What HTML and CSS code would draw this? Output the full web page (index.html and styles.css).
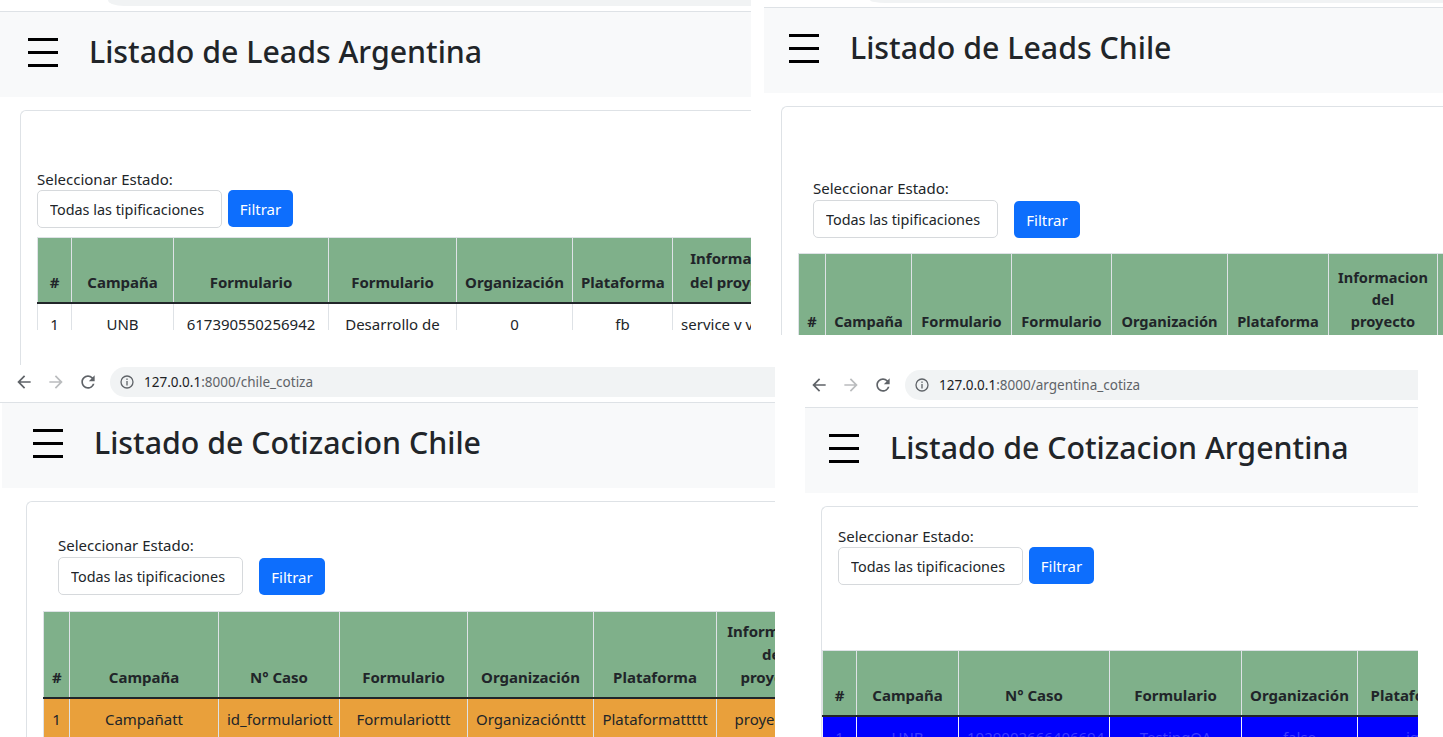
FILE: index.html
```html
<!DOCTYPE html>
<html lang="es">
<head>
<meta charset="utf-8">
<title>Listados</title>
<link rel="stylesheet" href="styles.css">
</head>
<body>
<div class="collage">

  <!-- Panel 1: Leads Argentina -->
  <section class="win w1">
    <div class="strip"><div class="pill"></div></div>
    <header class="navbar">
      <svg class="ham" width="30" height="29" viewBox="0 0 30 29"><rect x="0" y="0" width="30" height="3"/><rect x="0" y="13" width="30" height="3"/><rect x="0" y="26" width="30" height="3"/></svg>
      <h1>Listado de Leads Argentina</h1>
    </header>
    <div class="page">
      <div class="card">
        <div class="filter">
          <label class="lbl">Seleccionar Estado:</label>
          <div class="controls">
            <select class="sel"><option>Todas las tipificaciones</option></select>
            <button class="btn">Filtrar</button>
          </div>
        </div>
        <div class="tablewrap">
          <table class="grid t1">
            <thead>
              <tr><th>#</th><th>Campaña</th><th>Formulario</th><th>Formulario</th><th>Organización</th><th>Plataforma</th><th>Informacion del proyecto</th><th>Tipificación</th><th>Fecha</th></tr>
            </thead>
            <tbody>
              <tr><td>1</td><td>UNB</td><td>617390550256942</td><td>Desarrollo de software</td><td>0</td><td>fb</td><td>service y ventas</td><td>Nuevo</td><td>2023</td></tr>
            </tbody>
          </table>
        </div>
      </div>
    </div>
  </section>

  <!-- Panel 2: Leads Chile -->
  <section class="win w2">
    <div class="strip"><div class="pill"></div></div>
    <header class="navbar">
      <svg class="ham" width="30" height="29" viewBox="0 0 30 29"><rect x="0" y="0" width="30" height="3"/><rect x="0" y="13" width="30" height="3"/><rect x="0" y="26" width="30" height="3"/></svg>
      <h1>Listado de Leads Chile</h1>
    </header>
    <div class="page">
      <div class="card">
        <div class="filter">
          <label class="lbl">Seleccionar Estado:</label>
          <div class="controls">
            <select class="sel"><option>Todas las tipificaciones</option></select>
            <button class="btn">Filtrar</button>
          </div>
        </div>
        <div class="tablewrap">
          <table class="grid t2">
            <thead>
              <tr><th>#</th><th>Campaña</th><th>Formulario</th><th>Formulario</th><th>Organización</th><th>Plataforma</th><th><span class="mc">Informacion del proyecto</span></th><th></th></tr>
            </thead>
          </table>
        </div>
      </div>
    </div>
  </section>

  <!-- Panel 3: Cotizacion Chile -->
  <section class="win w3">
    <div class="urlbar">
      <div class="navbtns">
        <svg class="nav" width="20" height="20" viewBox="0 0 24 24"><path fill="#5f6368" d="M20 11H7.83l5.59-5.590L12 4l-8 8 8 8 1.41-1.41L7.83 13H20v-2z"/></svg>
        <svg class="nav" width="20" height="20" viewBox="0 0 24 24"><path fill="#babcbe" d="M4 11h12.17l-5.59-5.59L12 4l8 8-8 8-1.41-1.41L16.17 13H4v-2z"/></svg>
        <svg class="nav" width="20" height="20" viewBox="0 0 24 24"><path fill="#5f6368" d="M17.65 6.35A7.958 7.958 0 0 0 12 4c-4.42 0-7.99 3.58-7.99 8s3.57 8 7.99 8c3.73 0 6.84-2.55 7.73-6h-2.08A5.99 5.99 0 0 1 12 18c-3.31 0-6-2.69-6-6s2.69-6 6-6c1.66 0 3.14.69 4.22 1.78L13 11h7V4l-2.35 2.35z"/></svg>
      </div>
      <div class="omni">
        <svg class="info" width="14" height="14" viewBox="0 0 14 14"><circle cx="7" cy="7" r="6" fill="none" stroke="#5f6368" stroke-width="1.3"/><rect x="6.35" y="6" width="1.3" height="4.5" fill="#5f6368"/><rect x="6.35" y="3.5" width="1.3" height="1.4" fill="#5f6368"/></svg>
        <span class="url"><span class="host">127.0.0.1</span>:8000/chile_cotiza</span>
      </div>
    </div>
    <header class="navbar">
      <svg class="ham" width="30" height="29" viewBox="0 0 30 29"><rect x="0" y="0" width="30" height="3"/><rect x="0" y="13" width="30" height="3"/><rect x="0" y="26" width="30" height="3"/></svg>
      <h1>Listado de Cotizacion Chile</h1>
    </header>
    <div class="page">
      <div class="card">
        <div class="filter">
          <label class="lbl">Seleccionar Estado:</label>
          <div class="controls">
            <select class="sel"><option>Todas las tipificaciones</option></select>
            <button class="btn">Filtrar</button>
          </div>
        </div>
        <div class="tablewrap">
          <table class="grid t3">
            <thead>
              <tr><th>#</th><th>Campaña</th><th>N° Caso</th><th>Formulario</th><th>Organización</th><th>Plataforma</th><th><span class="mc">Informacion del proyecto</span></th><th>Fecha</th></tr>
            </thead>
            <tbody>
              <tr class="orange"><td>1</td><td>Campañatt</td><td>id_formulariott</td><td>Formulariottt</td><td>Organizaciónttt</td><td>Plataformattttt</td><td>proyectottt</td><td>fechatt</td></tr>
            </tbody>
          </table>
        </div>
      </div>
    </div>
  </section>

  <!-- Panel 4: Cotizacion Argentina -->
  <section class="win w4">
    <div class="urlbar">
      <div class="navbtns">
        <svg class="nav" width="20" height="20" viewBox="0 0 24 24"><path fill="#5f6368" d="M20 11H7.83l5.59-5.59L12 4l-8 8 8 8 1.41-1.41L7.83 13H20v-2z"/></svg>
        <svg class="nav" width="20" height="20" viewBox="0 0 24 24"><path fill="#babcbe" d="M4 11h12.17l-5.59-5.59L12 4l8 8-8 8-1.41-1.41L16.17 13H4v-2z"/></svg>
        <svg class="nav" width="20" height="20" viewBox="0 0 24 24"><path fill="#5f6368" d="M17.65 6.35A7.958 7.958 0 0 0 12 4c-4.42 0-7.99 3.58-7.99 8s3.57 8 7.99 8c3.73 0 6.84-2.55 7.73-6h-2.08A5.99 5.99 0 0 1 12 18c-3.31 0-6-2.69-6-6s2.69-6 6-6c1.66 0 3.14.69 4.22 1.78L13 11h7V4l-2.35 2.35z"/></svg>
      </div>
      <div class="omni">
        <svg class="info" width="14" height="14" viewBox="0 0 14 14"><circle cx="7" cy="7" r="6" fill="none" stroke="#5f6368" stroke-width="1.3"/><rect x="6.35" y="6" width="1.3" height="4.5" fill="#5f6368"/><rect x="6.35" y="3.5" width="1.3" height="1.4" fill="#5f6368"/></svg>
        <span class="url"><span class="host">127.0.0.1</span>:8000/argentina_cotiza</span>
      </div>
    </div>
    <header class="navbar">
      <svg class="ham" width="30" height="29" viewBox="0 0 30 29"><rect x="0" y="0" width="30" height="3"/><rect x="0" y="13" width="30" height="3"/><rect x="0" y="26" width="30" height="3"/></svg>
      <h1>Listado de Cotizacion Argentina</h1>
    </header>
    <div class="page">
      <div class="card">
        <div class="filter">
          <label class="lbl">Seleccionar Estado:</label>
          <div class="controls">
            <select class="sel"><option>Todas las tipificaciones</option></select>
            <button class="btn">Filtrar</button>
          </div>
        </div>
        <div class="tablewrap">
          <table class="grid t4">
            <thead>
              <tr><th>#</th><th>Campaña</th><th>N° Caso</th><th>Formulario</th><th>Organización</th><th>Plataforma</th><th>Informacion del proyecto</th></tr>
            </thead>
            <tbody>
              <tr class="blue"><td>1</td><td>UNB</td><td>1029002666406694</td><td>TestingQA</td><td>false</td><td>ig</td><td>proyecto</td></tr>
            </tbody>
          </table>
        </div>
      </div>
    </div>
  </section>

</div>
</body>
</html>
```

FILE: styles.css
```css
* { box-sizing: border-box; margin: 0; padding: 0; }

html, body {
  width: 1443px;
  height: 737px;
  overflow: hidden;
  background: #fff;
}

body {
  font-family: "Noto Sans", "Open Sans", sans-serif;
  color: #212529;
}

.collage {
  position: relative;
  width: 1443px;
  height: 737px;
  overflow: hidden;
  background: #fff;
}

/* screenshot windows placed on the collage canvas */
.win {
  position: absolute;
  overflow: hidden;
  background: #fff;
}
.w1 { left: 0; top: 0; width: 751px; height: 365px; }
.w2 { left: 764px; top: 0; width: 679px; height: 335px; }
.w3 { left: 0; top: 365px; width: 775px; height: 372px; }
.w4 { left: 805px; top: 362px; width: 613px; height: 375px; }

/* cropped browser top strip */
.strip {
  border-bottom: 1px solid #dee2e6;
}
.strip .pill {
  background: #f1f3f4;
}
.w1 .strip { height: 12px; }
.w1 .pill { margin-left: 108px; height: 6px; border-bottom-left-radius: 16px 6px; }
.w2 .strip { height: 8px; }
.w2 .pill { margin-left: 106px; height: 3px; border-bottom-left-radius: 16px 3px; }

/* browser url bar */
.urlbar {
  display: flex;
  align-items: flex-start;
  border-bottom: 1px solid #dee2e6;
}
.w3 .urlbar { height: 38px; padding: 2px 0 0 14px; }
.w4 .urlbar { height: 46px; padding: 8px 0 0 4px; }

.navbtns {
  display: flex;
  align-items: center;
  gap: 12px;
  height: 30px;
}
.nav { display: block; }

.omni {
  flex: 1;
  height: 30px;
  margin-left: 12px;
  background: #f1f3f4;
  border-radius: 15px 0 0 15px;
  display: flex;
  align-items: center;
  padding-left: 10px;
  gap: 10px;
}
.info { display: block; }
.url {
  font-size: 13.5px;
  color: #5f6368;
  white-space: nowrap;
}
.host { color: #202124; }

/* page navbar */
.navbar {
  height: 85px;
  background: #f8f9fa;
  display: flex;
  align-items: center;
  gap: 31px;
  padding-bottom: 5px;
}
.w1 .navbar { padding-left: 28px; }
.w2 .navbar { padding-left: 25px; }
.w3 .navbar { margin-left: 2px; padding-left: 31px; }
.w4 .navbar { padding-left: 24px; }

.ham { display: block; fill: #000; flex: none; }

.navbar h1 {
  font-size: 30.3px;
  font-weight: 500;
  line-height: 40px;
  color: #212529;
  white-space: nowrap;
}

/* content */
.page { padding-top: 13px; }

.card {
  height: 600px;
  border: 1px solid #dee2e6;
  border-right: 0;
  border-radius: 6px 0 0 6px;
}
.w1 .card { margin-left: 20px; }
.w2 .card { margin-left: 17px; }
.w3 .card { margin-left: 26px; }
.w4 .card { margin-left: 16px; }

.w1 .filter { padding: 57px 0 0 16px; }
.w2 .filter { padding: 70px 0 0 31px; }
.w3 .filter { padding: 32px 0 0 31px; }
.w4 .filter { padding: 18px 0 0 16px; }

.lbl {
  display: block;
  font-size: 15px;
  line-height: 22px;
  color: #212529;
}

.controls {
  display: flex;
  align-items: flex-start;
}
.w1 .controls, .w4 .controls { gap: 6px; }
.w2 .controls, .w3 .controls { gap: 16px; padding-top: 1px; }

.sel {
  appearance: none;
  -webkit-appearance: none;
  width: 185px;
  height: 38px;
  padding: 0 11px 0 12px;
  font-family: inherit;
  font-size: 14.4px;
  color: #212529;
  background: #fff;
  border: 1px solid #d6d9dc;
  border-radius: 5px;
}

.btn {
  width: 65px;
  height: 37px;
  border: 0;
  border-radius: 5px;
  background: #0d6efd;
  color: #fff;
  font-family: inherit;
  font-size: 15px;
}
.w2 .btn, .w3 .btn { width: 66px; margin-top: 1px; }

/* tables */
.tablewrap { overflow: hidden; }
.w1 .tablewrap { margin: 9px 0 0 16px; height: 93px; }
.w2 .tablewrap { margin: 15px 0 0 16px; }
.w3 .tablewrap { margin: 16px 0 0 16px; }
.w4 .tablewrap { margin: 65px 0 0 0; }

.grid {
  border-collapse: collapse;
  table-layout: fixed;
  font-size: 15px;
  line-height: 24px;
  color: #212529;
}
.grid th, .grid td {
  border: 1px solid #dee2e6;
  padding: 8px;
  text-align: center;
}
.grid th {
  background: #7fb08a;
  font-weight: 700;
  vertical-align: bottom;
}
.grid thead th { border-bottom: 2px solid #212529; }
.grid td { vertical-align: top; background: #fff; }

.w2 .grid th { line-height: 22px; padding: 12px 3px 8px; font-size: 14.6px; }
.w3 .grid th { line-height: 23px; }

.mc { display: inline-block; width: min-content; }

.orange td { background: #e9a03b; }
.blue td { background: #0000ff; color: #3b3bff; border-color: #f0f0ff; }

.t1 { width: 1003px; }
.t1 th:nth-child(1) { width: 34px; }
.t1 th:nth-child(2) { width: 102px; }
.t1 th:nth-child(3) { width: 155px; }
.t1 th:nth-child(4) { width: 128px; }
.t1 th:nth-child(5) { width: 116px; }
.t1 th:nth-child(6) { width: 100px; }
.t1 th:nth-child(7) { width: 128px; }
.t1 th:nth-child(8) { width: 120px; }
.t1 th:nth-child(9) { width: 120px; }

.t2 { width: 749px; }
.t2 th:nth-child(1) { width: 27px; }
.t2 th:nth-child(2) { width: 86px; }
.t2 th:nth-child(3) { width: 100px; }
.t2 th:nth-child(4) { width: 100px; }
.t2 th:nth-child(5) { width: 116px; }
.t2 th:nth-child(6) { width: 101px; }
.t2 th:nth-child(7) { width: 109px; }
.t2 th:nth-child(8) { width: 110px; }

.t3 { width: 897px; }
.t3 th:nth-child(1) { width: 26px; }
.t3 th:nth-child(2) { width: 149px; }
.t3 th:nth-child(3) { width: 121px; }
.t3 th:nth-child(4) { width: 128px; }
.t3 th:nth-child(5) { width: 126px; }
.t3 th:nth-child(6) { width: 123px; }
.t3 th:nth-child(7) { width: 114px; }
.t3 th:nth-child(8) { width: 110px; }

.t4 { width: 773px; }
.t4 th:nth-child(1) { width: 34px; }
.t4 th:nth-child(2) { width: 102px; }
.t4 th:nth-child(3) { width: 151px; }
.t4 th:nth-child(4) { width: 132px; }
.t4 th:nth-child(5) { width: 116px; }
.t4 th:nth-child(6) { width: 110px; }
.t4 th:nth-child(7) { width: 128px; }
```
